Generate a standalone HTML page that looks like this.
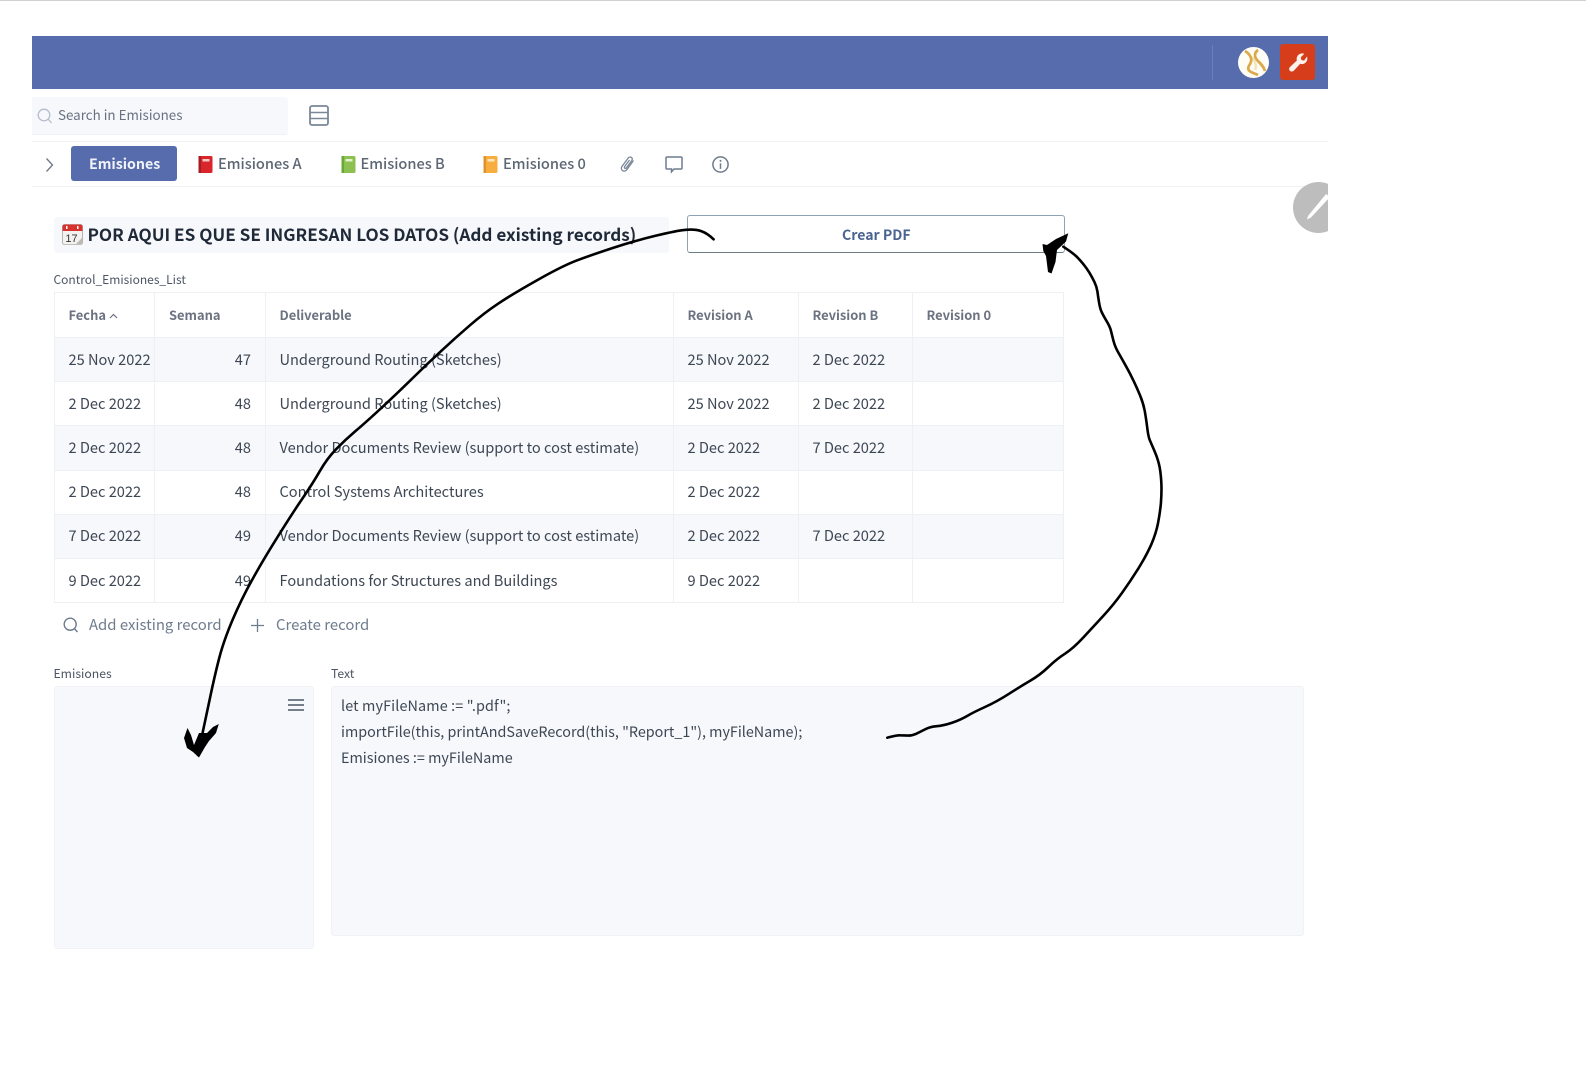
<!DOCTYPE html>
<html lang="en">
<head>
<meta charset="utf-8">
<title>Emisiones</title>
<style>
html,body{margin:0;padding:0;background:#fff}
body{position:relative;width:1586px;height:1069px;overflow:hidden;font-family:"Noto Sans CJK JP","Liberation Sans",sans-serif;color:#3d4754;font-size:15px}
.a{position:absolute}
.t{position:absolute;white-space:nowrap;line-height:20px}
.tabtxt{font-weight:500;color:#5d6673;font-size:14.6px}
table{position:absolute;left:53.5px;top:292px;width:1010px;height:310px;border-collapse:collapse;table-layout:fixed;border:1px solid #eef0f3}
td,th{padding:0 0 0 14px;box-sizing:border-box;border:1px solid #eef0f3;text-align:left;font-weight:400;white-space:nowrap;overflow:hidden;line-height:20px;font-size:14.6px;color:#3d4754}
td.d,th.d{padding-left:13.5px}
th{font-weight:700;color:#6b7280;font-size:12.9px}
tr{height:44.2px}
tr:first-child{height:45px}
tr.s td{background:#f7f8fc}
td.n{text-align:right;padding:0 14px 0 0}
svg{position:absolute;overflow:visible}
</style>
</head>
<body>
<div class="a" style="left:0;top:0;width:1586px;height:1px;background:#d2d2d2"></div>

<!-- header -->
<div class="a" style="left:32px;top:36px;width:1296px;height:53px;background:#566cad"></div>
<div class="a" style="left:1212px;top:45px;width:1px;height:35px;background:#6a7eb8"></div>
<svg style="left:1238px;top:47px" width="31" height="31" viewBox="0 0 31 31">
  <circle cx="15.5" cy="15.5" r="15.5" fill="#fffdf6"/>
  <path d="M14 10C17 14 19 19 17 23" fill="none" stroke="#f5e4b8" stroke-width="2.500"/>
  <path d="M7 4C12 7 15 12 12 17C10 20 9 23 13 25C15 26 18 27 20 28" fill="none" stroke="#dba94a" stroke-width="2.700"/>
  <path d="M20 3C16 6 16 10 20 14C23 17 26 20 27 24" fill="none" stroke="#dba94a" stroke-width="2.700"/>
</svg>
<div class="a" style="left:1280px;top:44px;width:35px;height:36px;background:#d63e1b;border-radius:3px"></div>
<svg style="left:1286px;top:51px" width="24" height="24" viewBox="0 0 24 24">
  <path d="M21 5.500c.8 2.500.1 4.800-1.600 6.300-1.500 1.300-3.400 1.600-5.200 1L8 19.500c-1.200 1.300-3 1.400-4.100.3-1.100-1.100-1-2.900.3-4.100l6.700-6.200c-.6-1.800-.2-3.700 1.100-5.200C13.500 2.600 15.800 1.900 18.300 2.700L14.800 6.300l.6 2.700 2.700.6z" fill="#fdf3ec"/>
</svg>

<!-- search row -->
<div class="a" style="left:32px;top:97px;width:256px;height:38px;background:#f7f8fc;border-bottom:1px solid #f0f1f5;box-sizing:border-box;border-radius:0 3px 3px 0"></div>
<svg style="left:37px;top:108px" width="16" height="16" viewBox="0 0 16 16"><circle cx="7" cy="7" r="5.800" fill="none" stroke="#b4bccb" stroke-width="1.300"/><path d="M11 11l3.500 4" stroke="#b4bccb" stroke-width="1.300" fill="none"/></svg>
<div class="t" style="left:58px;top:104px;color:#687280;font-size:13.4px">Search in Emisiones</div>
<svg style="left:309px;top:105px" width="20" height="21" viewBox="0 0 20 21"><rect x="1" y="1" width="18" height="19" rx="2" fill="none" stroke="#7a8797" stroke-width="1.800"/><path d="M1 7.500h18M1 13.500h18" stroke="#7a8797" stroke-width="1.500"/></svg>
<div class="a" style="left:32px;top:141px;width:1296px;height:1px;background:#f1f2f5"></div>

<!-- tabs -->
<svg style="left:45px;top:156.500px" width="9" height="16" viewBox="0 0 9 16"><path d="M1.500 1.500L7.500 8L1.500 14.500" fill="none" stroke="#6b7788" stroke-width="1.300"/></svg>
<div class="a" style="left:71px;top:146px;width:106px;height:35px;background:#566cad;border-radius:3px"></div>
<div class="t" style="left:89px;top:154px;color:#f1f3f9;font-weight:700;font-size:14.2px">Emisiones</div>

<svg style="left:198px;top:156px" width="15" height="17" viewBox="0 0 15 17"><rect x="0.500" width="14" height="17" rx="1.500" fill="#d8262c"/><rect x="0.500" width="2.500" height="17" fill="#a51d20"/><rect x="4.500" y="3" width="7" height="2.500" fill="#f6c9c9"/></svg>
<div class="t tabtxt" style="left:218px;top:154px">Emisiones A</div>
<svg style="left:341px;top:156px" width="15" height="17" viewBox="0 0 15 17"><rect x="0.500" width="14" height="17" rx="1.500" fill="#8cc152"/><rect x="0.500" width="2.500" height="17" fill="#6aa83a"/><rect x="4.500" y="3" width="7" height="2.500" fill="#e2f2cf"/></svg>
<div class="t tabtxt" style="left:360.500px;top:154px">Emisiones B</div>
<svg style="left:483px;top:156px" width="15" height="17" viewBox="0 0 15 17"><rect x="0.500" width="14" height="17" rx="1.500" fill="#f7ae3f"/><rect x="0.500" width="2.500" height="17" fill="#e0912a"/><rect x="4.500" y="3" width="7" height="2.500" fill="#fde6bd"/></svg>
<div class="t tabtxt" style="left:503px;top:154px">Emisiones 0</div>

<svg style="left:620px;top:155px" width="16" height="18" viewBox="0 0 16 18"><path d="M13.500 5.500L7 14.500c-1.200 1.700-3.200 2-4.500 1.100-1.300-.9-1.500-2.700-.4-4.300L8 3.200c.9-1.200 2.400-1.500 3.400-.8 1 .7 1.100 2 .3 3.200L6.500 12.800c-.5.600-1.200.8-1.700.4-.5-.4-.5-1-.1-1.700L9.500 5" fill="none" stroke="#7a8797" stroke-width="1.300"/></svg>
<svg style="left:665px;top:155.500px" width="18" height="17" viewBox="0 0 18 17"><path d="M2 1h14c.6 0 1 .4 1 1v10c0 .6-.4 1-1 1H9l-2.500 2.800V13H2c-.6 0-1-.4-1-1V2c0-.6.4-1 1-1z" fill="none" stroke="#6f7c8e" stroke-width="1.500"/></svg>
<svg style="left:711.500px;top:155.500px" width="17" height="17" viewBox="0 0 17 17"><circle cx="8.500" cy="8.500" r="7.600" fill="none" stroke="#6f7c8e" stroke-width="1.500"/><circle cx="8.500" cy="4.900" r="1" fill="#6f7c8e"/><path d="M8.500 7.300v5.600" stroke="#6f7c8e" stroke-width="1.500"/></svg>
<div class="a" style="left:32px;top:186px;width:1296px;height:1px;background:#f1f2f5"></div>

<!-- pencil bubble, clipped at 1328 -->
<div class="a" style="left:1280px;top:170px;width:48px;height:70px;overflow:hidden">
  <div class="a" style="left:12.500px;top:11.500px;width:51px;height:51px;border-radius:50%;background:#bdbdbd"></div>
  <svg style="left:0;top:0" width="48" height="70" viewBox="0 0 48 70"><path d="M27 49.500l1-3.500L46 24l4 3-19 20.500z" fill="#fff"/></svg>
</div>

<!-- title + button -->
<div class="a" style="left:54px;top:217px;width:615px;height:36px;background:#f7f8fc;border-radius:3px"></div>
<svg style="left:62px;top:224px" width="21" height="21" viewBox="0 0 21 21">
  <rect x="0.500" y="0.500" width="20" height="20" rx="2" fill="#f4f2ee" stroke="#8a8a8a" stroke-width=".6"/>
  <path d="M.5 7V2.500c0-1 1-2 2-2h16c1 0 2 1 2 2V7z" fill="#d8322e"/>
  <rect x="4" y="2" width="1.500" height="3" fill="#fff"/><rect x="15" y="2" width="1.500" height="3" fill="#fff"/>
  <text x="9.500" y="18" text-anchor="middle" font-size="11" font-family="Liberation Sans" fill="#333">17</text>
  <path d="M14 20l6-6v5l-1 1z" fill="#bdb9b0"/>
</svg>
<div class="t" style="left:87.500px;top:223.500px;font-size:17.150px;font-weight:700;color:#1f2937">POR AQUI ES QUE SE INGRESAN LOS DATOS (Add existing records)</div>
<div class="a" style="left:687px;top:215px;width:378px;height:38px;box-sizing:border-box;background:#fff;border:1px solid #8ea2b4;border-bottom-color:#6c7d88;border-radius:3px"></div>
<div class="t" style="left:842px;top:224.500px;font-size:14.100px;font-weight:700;color:#4a6491">Crear PDF</div>

<div class="t" style="left:53.500px;top:270px;font-size:12px;color:#4b5563">Control_Emisiones_List</div>

<!-- table -->
<table>
<colgroup><col style="width:100.500px"><col style="width:111px"><col style="width:407.500px"><col style="width:125px"><col style="width:114px"><col></colgroup>
<tr><th>Fecha <svg style="position:static;vertical-align:1px" width="9" height="6" viewBox="0 0 9 6"><path d="M1 5l3.500-3.500L8 5" fill="none" stroke="#6b7280" stroke-width="1.200"/></svg></th><th>Semana</th><th class="d">Deliverable</th><th>Revision A</th><th>Revision B</th><th>Revision 0</th></tr>
<tr class="s"><td>25 Nov 2022</td><td class="n">47</td><td class="d">Underground Routing (Sketches)</td><td>25 Nov 2022</td><td>2 Dec 2022</td><td></td></tr>
<tr><td>2 Dec 2022</td><td class="n">48</td><td class="d">Underground Routing (Sketches)</td><td>25 Nov 2022</td><td>2 Dec 2022</td><td></td></tr>
<tr class="s"><td>2 Dec 2022</td><td class="n">48</td><td class="d">Vendor Documents Review (support to cost estimate)</td><td>2 Dec 2022</td><td>7 Dec 2022</td><td></td></tr>
<tr><td>2 Dec 2022</td><td class="n">48</td><td class="d">Control Systems Architectures</td><td>2 Dec 2022</td><td></td><td></td></tr>
<tr class="s"><td>7 Dec 2022</td><td class="n">49</td><td class="d">Vendor Documents Review (support to cost estimate)</td><td>2 Dec 2022</td><td>7 Dec 2022</td><td></td></tr>
<tr><td>9 Dec 2022</td><td class="n">49</td><td class="d">Foundations for Structures and Buildings</td><td>9 Dec 2022</td><td></td><td></td></tr>
</table>

<!-- table footer -->
<svg style="left:63px;top:617px" width="16" height="16" viewBox="0 0 16 16"><circle cx="7.200" cy="7.200" r="6" fill="none" stroke="#6f7c8e" stroke-width="1.400"/><path d="M11.300 11.500l3.200 3.500" stroke="#6f7c8e" stroke-width="1.400"/></svg>
<div class="t" style="left:89px;top:614.500px;color:#6f7c8e;font-size:14.900px">Add existing record</div>
<svg style="left:251px;top:619px" width="13" height="13" viewBox="0 0 13 13"><path d="M6.500 0v13M0 6.500h13" stroke="#6f7c8e" stroke-width="1.300"/></svg>
<div class="t" style="left:276px;top:614.500px;color:#6f7c8e;font-size:14.900px">Create record</div>

<!-- bottom panels -->
<div class="t" style="left:53.500px;top:663px;font-size:12.200px;color:#4b5563">Emisiones</div>
<div class="t" style="left:331px;top:663px;font-size:12.200px;color:#4b5563">Text</div>
<div class="a" style="left:53.500px;top:686px;width:260.500px;height:263px;box-sizing:border-box;background:#f7f8fc;border:1px solid #f1f2f6;border-radius:3px"></div>
<svg style="left:288px;top:699px" width="16" height="12" viewBox="0 0 16 12"><path d="M0 1h16M0 6h16M0 11h16" stroke="#4b5563" stroke-width="1.500"/></svg>
<div class="a" style="left:331px;top:686px;width:973px;height:250px;box-sizing:border-box;background:#f7f8fc;border:1px solid #f1f2f6;border-radius:3px"></div>
<div class="t" style="left:341px;top:696px;font-size:14.400px;letter-spacing:.12px">let myFileName := ".pdf";</div>
<div class="t" style="left:341px;top:722px;font-size:14.350px">importFile(this, printAndSaveRecord(this, "Report_1"), myFileName);</div>
<div class="t" style="left:341px;top:748px;font-size:14.400px">Emisiones := myFileName</div>

<!-- hand-drawn arrows -->
<svg style="left:0;top:0" width="1586" height="1069" viewBox="0 0 1586 1069">
  <g fill="none" stroke="#000" stroke-width="2.600" stroke-linecap="round" stroke-linejoin="round">
    <path d="M713.600 239.300Q707.500 233.300 701.200 231.100Q695 229 686 229.800Q677 230.500 655.500 235.800Q634 241 612.700 248Q591.400 255 577.200 260.300Q563 265.600 538 279.700Q513 293.700 498.500 303.400Q484 313 469.900 325.300Q455.700 337.500 441.400 350.800Q427 364 412.800 378Q398.600 392 382.500 406.900Q366.400 421.800 355.700 430.900Q345 440 336 449.300Q327 458.600 320 470.800Q313 483 302.200 498.900Q291.400 514.700 277.200 537.600Q262.900 560.400 252.200 579.700Q241.400 599 232.500 620Q223.600 641 219.100 658.500Q214.600 676 210.200 697Q205.700 718 197.900 755"/>
    <path d="M887.300 737.700Q896.700 735 900.400 735.300Q904 735.500 907.900 735.600Q911.700 735.700 915.900 733.900Q920 732 925 729.400Q930 726.700 936.700 726.200Q943.300 725.700 951.700 722.900Q960 720 966.700 716.200Q973.300 712.300 985 707Q996.700 701.700 1008.400 694.200Q1020 686.700 1030 680.900Q1040 675 1048.400 667Q1056.700 659 1065 653.700Q1073.300 648.300 1083.300 637.500Q1093.300 626.700 1103.300 615.900Q1113.300 605 1121.700 593.400Q1130 581.700 1138.400 568.400Q1146.700 555 1151.400 544.200Q1156 533.300 1158 523.200Q1160 513 1160.900 503.200Q1161.700 493.300 1161.400 484.200Q1161 475 1159.700 467.500Q1158.300 460 1154.700 451.500Q1151 443 1149.700 439.900Q1148.300 436.700 1147.200 427.400Q1146 418 1144.700 410.700Q1143.300 403.300 1140.200 395.700Q1137 388 1133.500 380.700Q1130 373.300 1126 366.200Q1122 359 1118.500 352.900Q1115 346.700 1113.500 340.900Q1112 335 1111 330.900Q1110 326.700 1106.500 320.900Q1103 315 1101.500 311.700Q1100 308.300 1099 302.200Q1098 296 1097.400 291.400Q1096.700 286.700 1094.400 281.900Q1092 277 1089.400 272.700Q1086.700 268.300 1083.400 264.200Q1080 260 1076.700 256.700Q1073.300 253.300 1063.300 246.700"/>
  </g>
  <path d="M184 738L187.500 728 191 735 194 745 199 733 207 733 213 727 218.800 724 216 733 209 741 205 747 199 757.500 193 752 187 748z" fill="#000"/>
  <path d="M1068.300 233.300L1066 241.500 1057 250 1055.500 262 1051.500 273.500 1048 272 1046 256 1043.300 251 1042.500 244 1047 245 1056 239z" fill="#000"/>
</svg>
</body>
</html>
